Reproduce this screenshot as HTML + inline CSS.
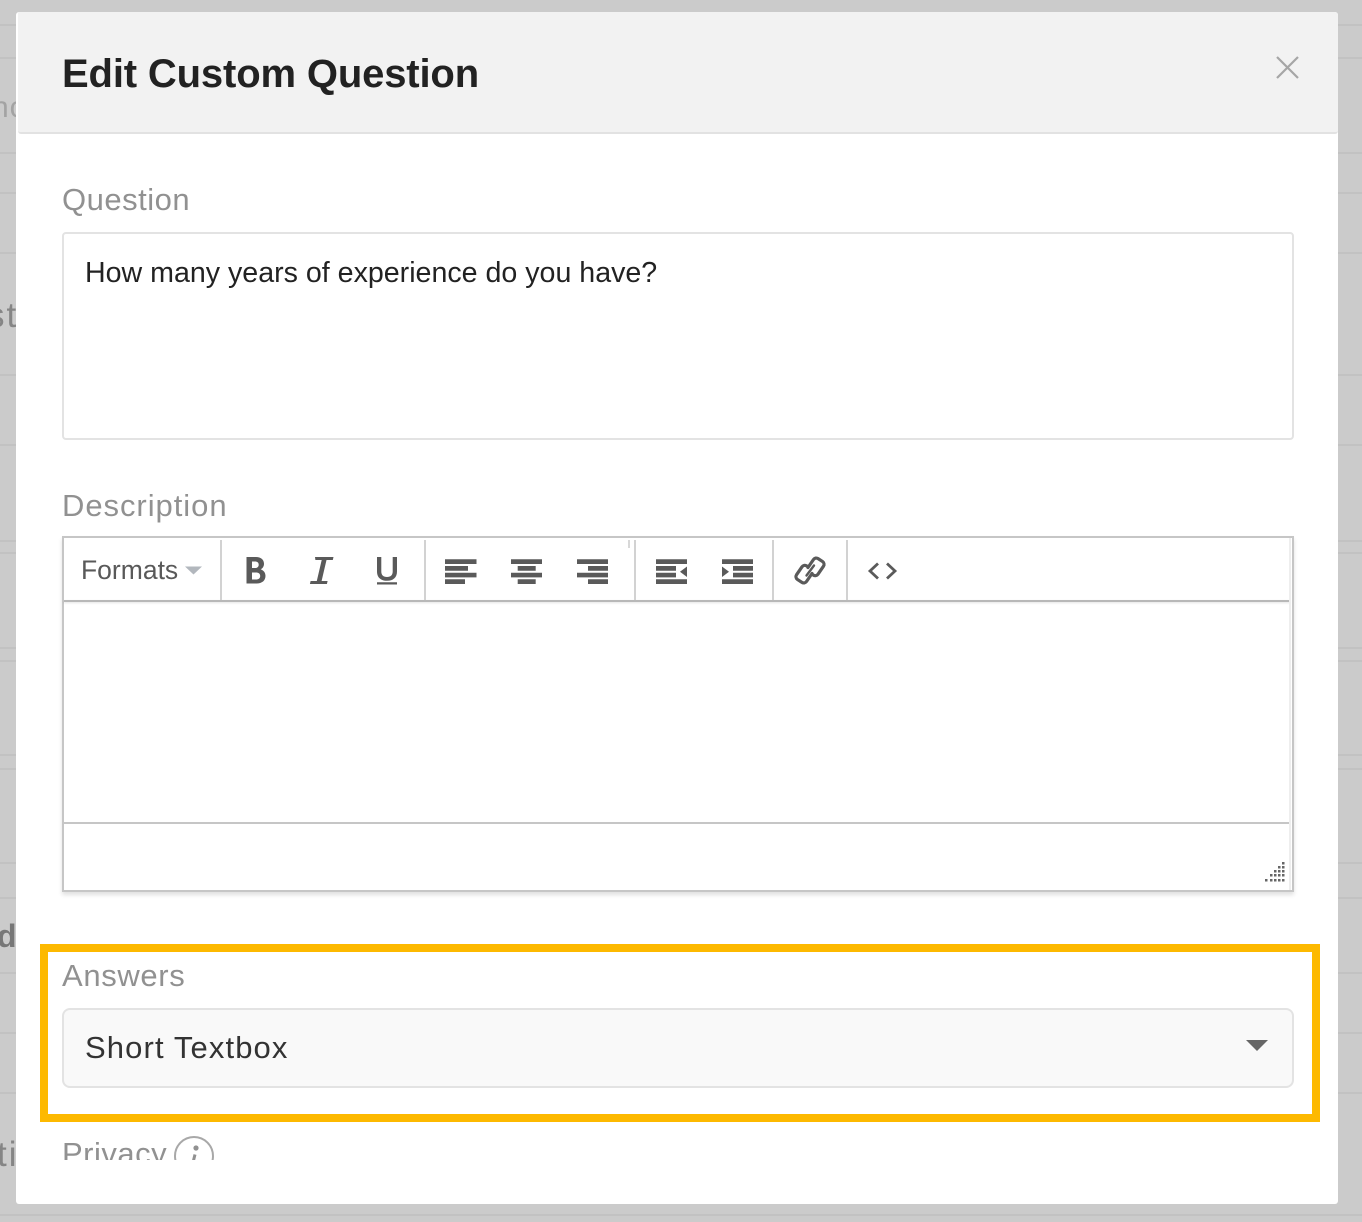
<!DOCTYPE html>
<html><head><meta charset="utf-8"><style>
html,body{margin:0;padding:0;width:1362px;height:1222px;overflow:hidden;background:#cbcbcb;font-family:"Liberation Sans",sans-serif}
div,span{position:absolute;box-sizing:border-box}
.t{white-space:nowrap;line-height:1}
.l{height:2px;background:#c2c2c2}
.lab{color:#919191;font-size:31px;left:62px}
.bg{color:#858585;font-size:35px}
</style></head><body>
<div class="l" style="left:0;width:1362px;top:24px"></div>
<div class="l" style="left:0;width:1362px;top:57px"></div>
<div class="l" style="left:0;width:1362px;top:152px"></div>
<div class="l" style="left:0;width:1362px;top:192px"></div>
<div class="l" style="left:0;width:1362px;top:252px"></div>
<div class="l" style="left:0;width:1362px;top:374px"></div>
<div class="l" style="left:0;width:1362px;top:444px"></div>
<div class="l" style="left:0;width:1362px;top:540px"></div>
<div class="l" style="left:0;width:1362px;top:552px"></div>
<div class="l" style="left:0;width:1362px;top:647px"></div>
<div class="l" style="left:0;width:1362px;top:660px"></div>
<div class="l" style="left:0;width:1362px;top:754px"></div>
<div class="l" style="left:0;width:1362px;top:768px"></div>
<div class="l" style="left:0;width:1362px;top:862px"></div>
<div class="l" style="left:0;width:1362px;top:897px"></div>
<div class="l" style="left:0;width:1362px;top:972px"></div>
<div class="l" style="left:0;width:1362px;top:1032px"></div>
<div class="l" style="left:0;width:1362px;top:1092px"></div>
<div class="l" style="left:0;width:1362px;top:1214px"></div>
<div class="t" style="left:-8px;top:93px;font-size:30px;color:#a3a3a3;letter-spacing:1px">nc</div>
<div class="t bg" style="left:-13px;top:298px;letter-spacing:2px">st</div>
<div class="t" style="left:-3px;top:920px;font-size:32px;font-weight:bold;color:#777">d</div>
<div class="t bg" style="left:-3px;top:1137px;letter-spacing:2px">ti</div>

<div style="left:16px;top:12px;width:1322px;height:1192px;background:#fff;border-radius:3px;overflow:hidden">
<div style="left:2px;top:0;width:1320px;height:122px;background:#f2f2f2;border-bottom:2px solid #e2e2e2;border-radius:0 0 3px 3px"></div>
</div>
<div class="t" style="left:62px;top:54px;font-size:40px;font-weight:bold;color:#222;letter-spacing:-.15px">Edit Custom Question</div>
<svg style="position:absolute;left:1270px;top:50px" width="36" height="36"><path d="M7 7L28 28M28 7L7 28" stroke="#a6a6a6" stroke-width="2.2" fill="none"/></svg>

<div class="t lab" style="top:184px;letter-spacing:.5px">Question</div>
<div style="left:62px;top:232px;width:1232px;height:208px;border:2px solid #e3e3e3;border-radius:4px;background:#fff"></div>
<div class="t" style="left:85px;top:259px;font-size:28.6px;color:#222">How many years of experience do you have?</div>

<div class="t lab" style="top:490px;letter-spacing:.95px">Description</div>
<div style="left:62px;top:536px;width:1232px;height:356px;border:2px solid #c6c6c6;box-shadow:0 3px 4px rgba(0,0,0,.12);background:#fff"></div>
<div style="left:64px;top:600px;width:1226px;height:2px;background:#b8b8b8;box-shadow:0 1px 2px rgba(0,0,0,.12)"></div>
<div style="left:64px;top:822px;width:1226px;height:2px;background:#c6c6c6"></div>
<div style="left:1289px;top:538px;width:2px;height:352px;background:#eee"></div>
<div style="left:220px;top:540px;width:2px;height:60px;background:#d2d2d2"></div>
<div style="left:424px;top:540px;width:2px;height:60px;background:#d2d2d2"></div>
<div style="left:634px;top:540px;width:2px;height:60px;background:#d2d2d2"></div>
<div style="left:772px;top:540px;width:2px;height:60px;background:#d2d2d2"></div>
<div style="left:846px;top:540px;width:2px;height:60px;background:#d2d2d2"></div>
<div style="left:628px;top:540px;width:2px;height:8px;background:#d8d8d8"></div>

<div class="t" style="left:81px;top:557px;font-size:26.5px;color:#595959">Formats</div>
<svg style="position:absolute;left:0;top:0" width="1362" height="1222" fill="#5a5a5a">
<path d="M185 566.500H202L193.500 574.500Z" fill="#b2b7bd"/>
<!-- B -->
<path fill-rule="evenodd" d="M246.500 557h9.500c5 0 8 2.700 8 6.800 0 2.600-1.300 4.600-3.300 5.600 2.900 1 4.800 3.300 4.800 6.500 0 4.700-3.500 7.600-9 7.600h-10ZM252 561.500v6.500h3c2.400 0 3.700-1.300 3.700-3.300s-1.300-3.200-3.700-3.200ZM252 572.500v7h4c2.600 0 4.200-1.300 4.200-3.500s-1.600-3.500-4.200-3.500Z"/>
<!-- I -->
<path d="M315 557h18.500l-.7 3h-6.300l-4.900 21h6l-.7 3h-17l.7-3h6.200l4.900-21h-6.300Z"/>
<!-- U -->
<path d="M377 557h4.300v14.500c0 3.600 2.100 5.500 5.700 5.500s5.700-1.900 5.700-5.500V557h4.300v14.500c0 6-3.900 9.300-10 9.300s-10-3.300-10-9.300ZM377 582.300h20v2.200h-20Z"/>
<!-- align left -->
<path d="M445 559.300h31.500v4.700H445ZM445 566h23v4.700h-23ZM445 572.700h31.500v4.700H445ZM445 579.300h20v4.700h-20Z"/>
<!-- align center -->
<path d="M511 559.300h31v4.700h-31ZM517.700 566h18v4.700h-18ZM511 572.700h31v4.700h-31ZM517.700 579.300h18v4.700h-18Z"/>
<!-- align right -->
<path d="M577 559.300h31v4.700h-31ZM588 566h20v4.700h-20ZM577 572.700h31v4.700h-31ZM588 579.300h20v4.700h-20Z"/>
<!-- outdent -->
<path d="M656 559.300h31v4.700h-31ZM656 566h20v4.700h-20ZM656 572.700h20v4.700h-20ZM656 579.300h31v4.700h-31ZM687 566.500v10.500l-7-5.200Z"/>
<!-- indent -->
<path d="M722 559.300h31v4.700h-31ZM733 566h20v4.700h-20ZM733 572.700h20v4.700h-20ZM722 579.300h31v4.700h-31ZM722 566.500v10.500l7-5.200Z"/>
<!-- link -->
<g fill="none" stroke="#5a5a5a" stroke-width="3.200" stroke-linecap="round" stroke-linejoin="round">
<path d="M808 567.500l5.500-8a3.400 3.400 0 0 1 4.600-.9l4.500 3a3.400 3.400 0 0 1 .9 4.600l-5.500 8a3.400 3.400 0 0 1-4.600.9l-1.400-.9"/>
<path d="M812 573.500l-5.500 8a3.400 3.400 0 0 1-4.600.9l-4.500-3a3.400 3.400 0 0 1-.9-4.600l5.500-8a3.400 3.400 0 0 1 4.600-.9l1.400.9"/>
<path d="M806.500 575.500L814 565.500" stroke-width="2.400"/>
</g>
<!-- code -->
<path d="M878 563.500L870 571L878 578.500M887 563.500L895 571L887 578.500" fill="none" stroke="#5a5a5a" stroke-width="2.800"/>
<!-- resize dots -->
<g fill="#666">
<rect x="1282" y="862" width="2.500" height="2.500"/>
<rect x="1278" y="866" width="2.500" height="2.500"/><rect x="1282" y="866" width="2.500" height="2.500"/>
<rect x="1274" y="870" width="2.500" height="2.500"/><rect x="1278" y="870" width="2.500" height="2.500"/><rect x="1282" y="870" width="2.500" height="2.500"/>
<rect x="1270" y="874" width="2.500" height="2.500"/><rect x="1274" y="874" width="2.500" height="2.500"/><rect x="1278" y="874" width="2.500" height="2.500"/><rect x="1282" y="874" width="2.500" height="2.500"/>
<rect x="1265" y="879" width="2.500" height="2.500"/><rect x="1270" y="879" width="2.500" height="2.500"/><rect x="1274" y="879" width="2.500" height="2.500"/><rect x="1278" y="879" width="2.500" height="2.500"/><rect x="1282" y="879" width="2.500" height="2.500"/>
</g>
</svg>

<div style="left:40px;top:944px;width:1280px;height:178px;border:8px solid #fdb900"></div>
<div class="t lab" style="top:960px;letter-spacing:.65px">Answers</div>
<div style="left:62px;top:1008px;width:1232px;height:80px;border:2px solid #e3e3e3;border-radius:8px;background:#f9f9f9"></div>
<div class="t" style="left:85px;top:1032px;font-size:31px;color:#333;letter-spacing:1.12px">Short Textbox</div>
<svg style="position:absolute;left:1240px;top:1030px" width="36" height="30"><path d="M6 10H28L17 21Z" fill="#666"/></svg>

<div style="left:50px;top:1125px;width:200px;height:35px;overflow:hidden">
<div class="t lab" style="left:12px;top:13px;letter-spacing:.5px">Privacy</div>
<svg style="position:absolute;left:122px;top:10px" width="44" height="44"><circle cx="22" cy="21" r="19" fill="none" stroke="#a8a8a8" stroke-width="2"/><circle cx="24" cy="13" r="2.600" fill="#919191"/><path d="M23 19.500l-2.500 10-2.500 2" fill="none" stroke="#919191" stroke-width="3"/></svg>
</div>
</body></html>
